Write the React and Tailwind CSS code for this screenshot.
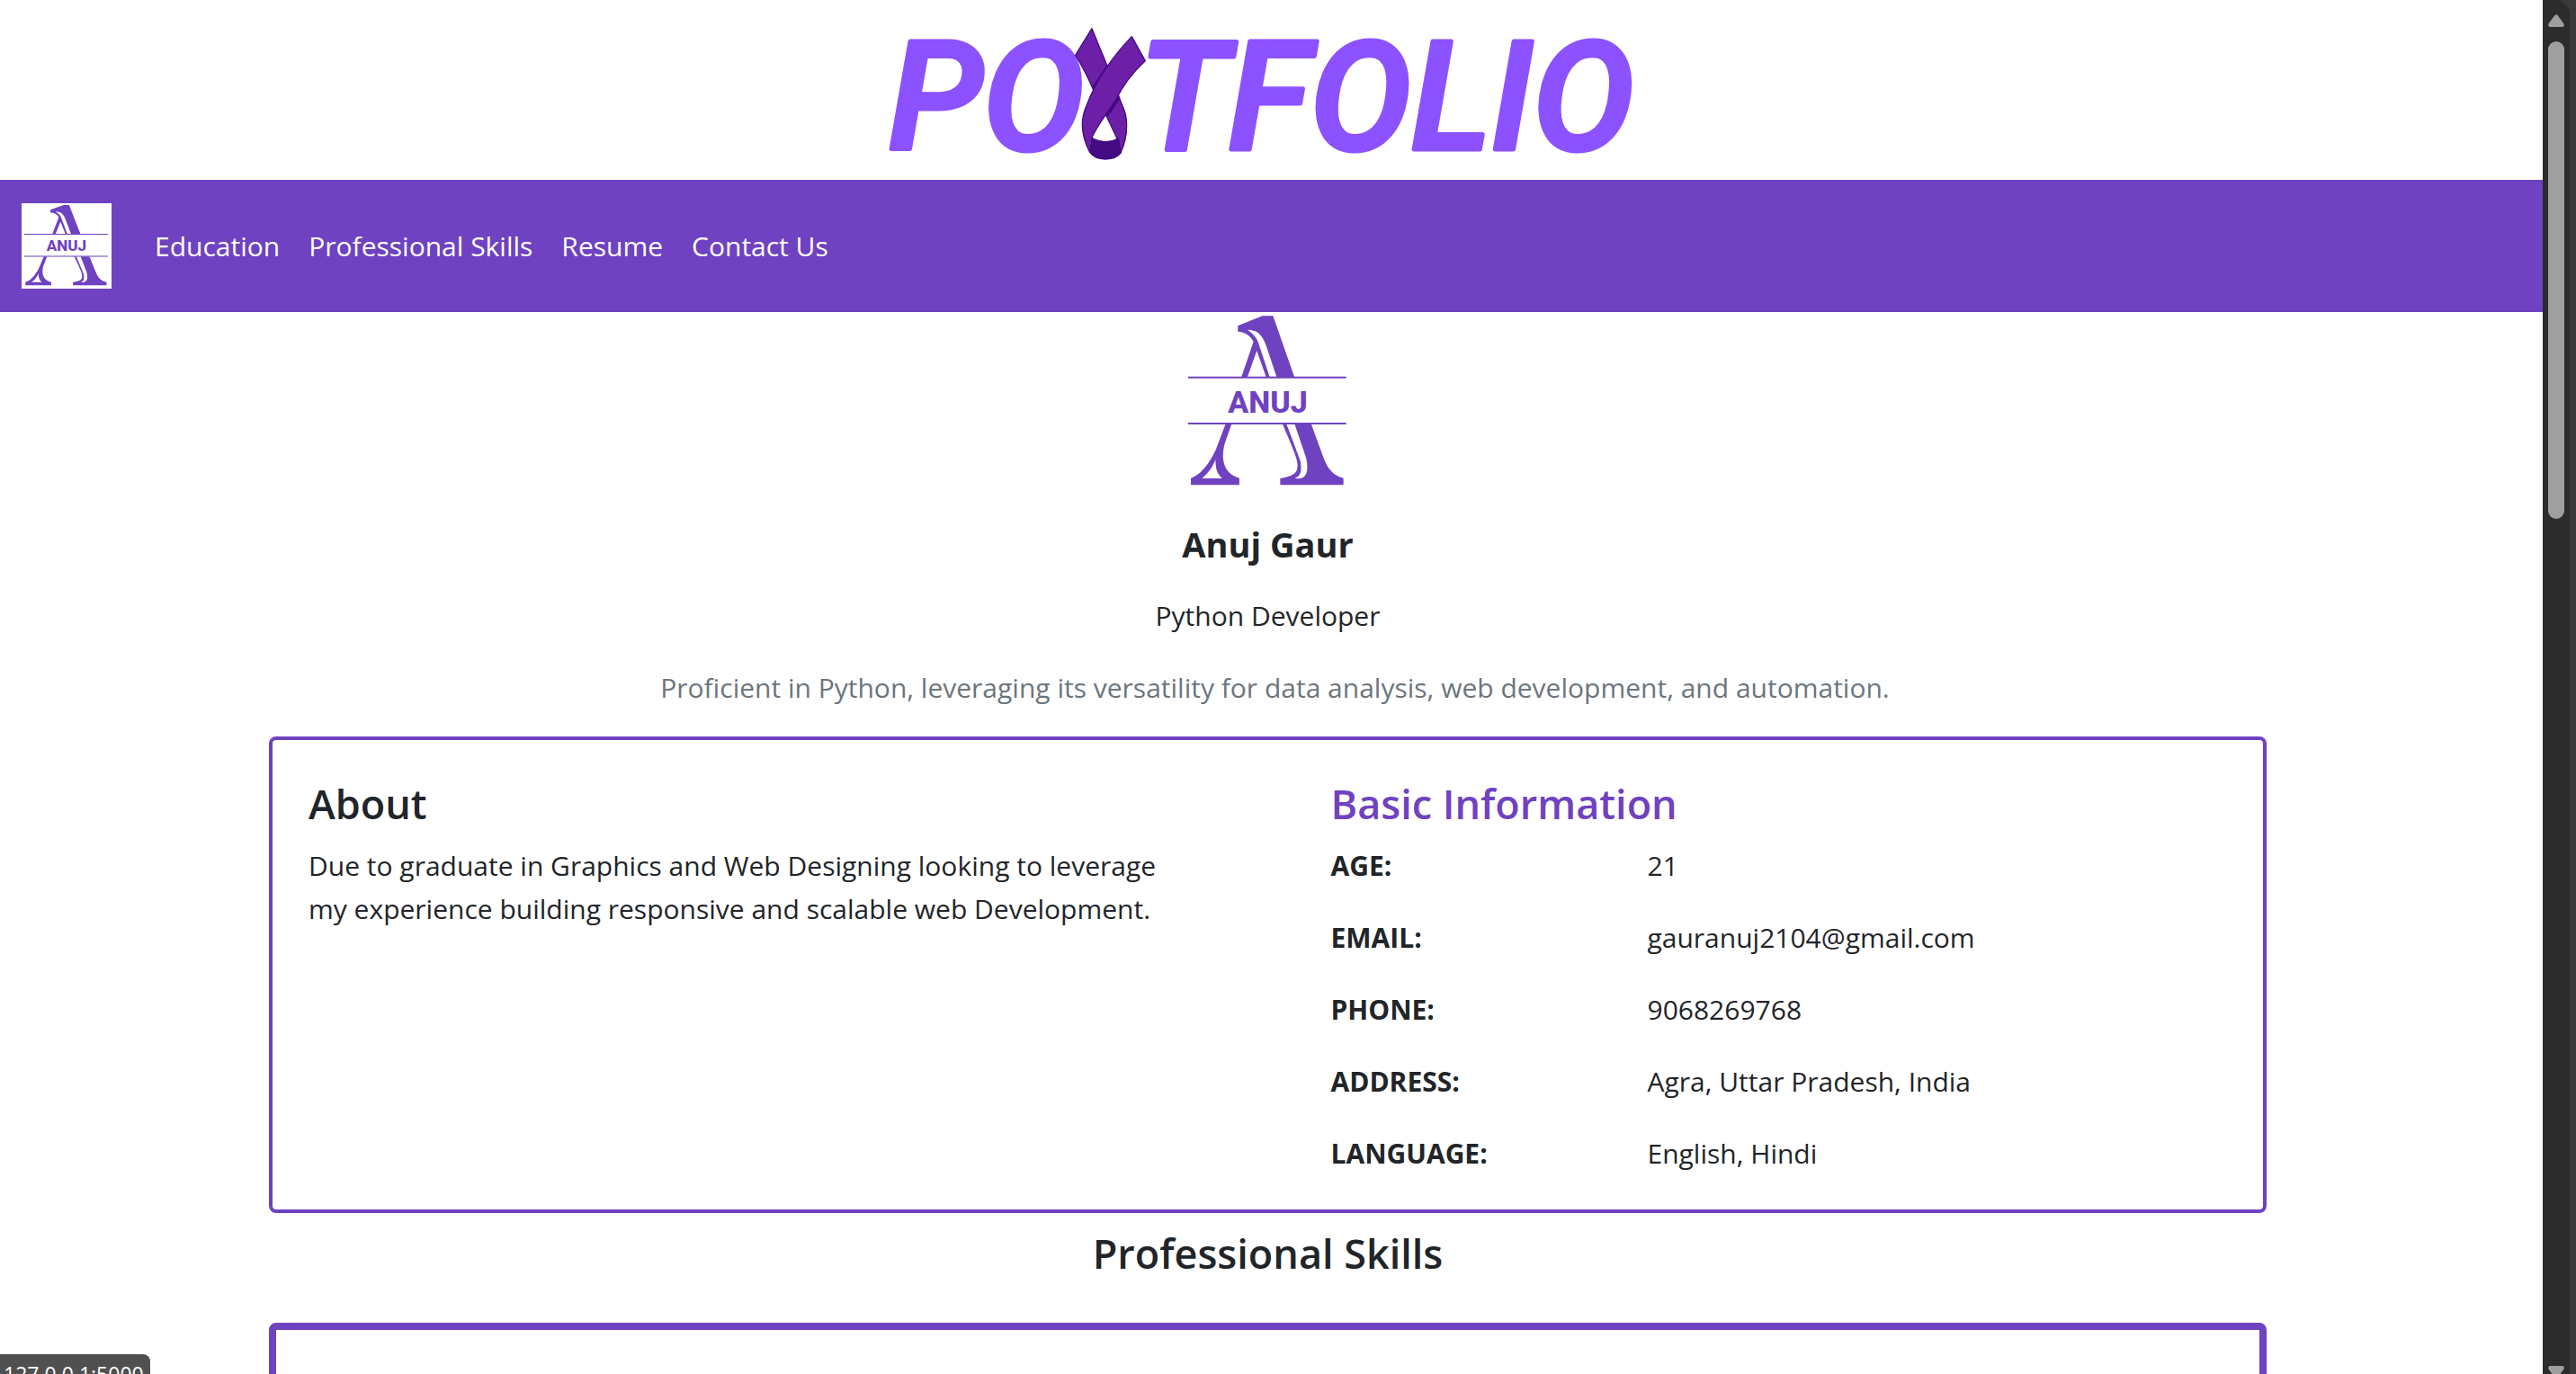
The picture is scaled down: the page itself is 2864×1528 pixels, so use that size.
const navLinks = ["Education", "Professional Skills", "Resume", "Contact Us"];

const basicInfo = [
  ["AGE:", "21"],
  ["EMAIL:", "gauranuj2104@gmail.com"],
  ["PHONE:", "9068269768"],
  ["ADDRESS:", "Agra, Uttar Pradesh, India"],
  ["LANGUAGE:", "English, Hindi"],
];

function Wordmark() {
  return (
    <svg
      className="h-[200px] w-[860px]"
      viewBox="0 0 860 200"
      role="img"
      aria-label="Portfolio"
    >
      <g
        fill="#8c52ff"
        stroke="#8c52ff"
        strokeWidth="5"
        strokeLinejoin="round"
        fontFamily="Roboto, sans-serif"
        fontStyle="italic"
        fontWeight="500"
        fontSize="169"
      >
        <text x="8" y="166">PO</text>
        <text x="286" y="166">TFOLIO</text>
      </g>
      <g
        transform="translate(-10 10) scale(0.3333)"
        strokeLinejoin="round"
        strokeWidth="4"
        stroke="#430a82"
        fill="#6d1fa8"
      >
        <path d="M732 65 L783 190 L738 272 C722 235 700 190 677 154Z" />
        <path d="M783 190 L800 178 L742 278 L735 260Z" fill="#430a82" />
        <path d="M820 288 C835 330 848 345 848 388 C848 425 840 455 827 482 L816 432 L776 348Z" />
        <path d="M820 288 L824 300 L784 358 L776 348Z" fill="#430a82" />
        <path
          d="M727 428 Q775 456 820 432 L828 480 C810 508 745 508 727 480Z"
          fill="#430a82"
        />
        <path d="M865 92 L910 173 C870 210 838 250 815 298 C785 345 745 395 732 430 L725 478 C697 425 692 370 715 320 C745 240 800 160 865 92Z" />
      </g>
    </svg>
  );
}

function Monogram({ boxClass, textClass }) {
  return (
    <span className={`grid place-items-center bg-white text-[#6f42c1] ${boxClass}`}>
      <svg
        className="col-start-1 row-start-1 h-full w-full"
        viewBox="48 23 562 600"
        preserveAspectRatio="none"
        fill="currentColor"
        fillRule="evenodd"
        aria-hidden="true"
      >
        <path d="M310 36 H345 L416 240 H357 L322 135 C308 95 290 82 260 82 C275 92 288 105 295 122 L334 240 H322 L291 152 L260 240 H240 L280 122 C268 98 250 90 228 88 V69Z" />
        <path d="M63 238 H588 V244 H63Z M63 392 H588 V398 H63Z" />
        <path d="M187 397 H207 L184 463 C172 510 178 562 233 577 V600 H72 V577 C110 565 140 515 155 482Z M109 578 H176 C158 562 154 545 154 515 C145 540 132 558 109 578Z" />
        <path d="M377 397 H472 L515 515 C530 550 545 568 579 577 V600 H369 V578 C405 572 430 565 426 530 C424 505 405 465 377 397Z M390 397 H417 L455 510 C466 560 452 579 430 579 L417 578 C440 570 440 550 436 520Z" />
      </svg>
      <span
        className={`col-start-1 row-start-1 font-[Roboto,sans-serif] font-extrabold leading-none ${textClass}`}
      >
        ANUJ
      </span>
    </span>
  );
}

function Scrollbar() {
  return (
    <div className="flex w-[37px] shrink-0 bg-[#3a3a3a]" aria-hidden="true">
      <div className="flex w-[30px] flex-col items-center rounded-tr-2xl bg-[#2c2c2c] pt-4">
        <svg className="h-[14px] w-[18px]" viewBox="0 0 18 14" fill="#9f9f9f">
          <path d="M7 1.5 Q9 -1 11 1.5 L17.5 10.5 Q18.500 13.500 16 14 H2 Q-.5 13.500 .5 10.500Z" />
        </svg>
        <div className="mt-4 h-[531px] w-[18px] rounded-full bg-[#9f9f9f]" />
        <svg className="mt-auto h-[9px] w-[18px] shrink-0" viewBox="0 0 18 9" fill="#9f9f9f">
          <path d="M2 0 H16 Q18.500 .5 17.500 3.500 L13.500 9 H4.500 L.5 3.500 Q-.5 .5 2 0Z" />
        </svg>
      </div>
    </div>
  );
}

export default function App() {
  return (
    <div className="flex h-screen overflow-hidden bg-white font-['Open_Sans','Noto_Sans',sans-serif] text-[30px] leading-[48px] text-[#212529]">
      <div className="min-w-0 flex-1 overflow-hidden">
        <header>
          <h1 className="flex justify-center pr-2">
            <Wordmark />
          </h1>
          <nav className="flex h-[147px] items-center bg-[#6f42c1] px-6 text-white">
            <a href="#home" aria-label="Home">
              <Monogram boxClass="h-[95px] w-[100px]" textClass="text-[17px]" />
            </a>
            <ul className="ml-12 flex gap-8">
              {navLinks.map((label) => (
                <li key={label}>
                  <a href="#section">{label}</a>
                </li>
              ))}
            </ul>
          </nav>
        </header>

        <main className="pr-2">
          <section className="flex flex-col items-center text-center">
            <Monogram boxClass="h-[200px] w-[188px]" textClass="text-[34px]" />
            <h2 className="mt-[34px] text-[38px] font-bold">Anuj Gaur</h2>
            <p className="mt-8">Python Developer</p>
            <p className="mt-8 pl-4 text-[#6c757d]">
              Proficient in Python, leveraging its versatility for data analysis, web
              development, and automation.
            </p>
          </section>

          <section className="mx-auto mt-[30px] grid max-w-[2221px] grid-cols-2 rounded-lg border-4 border-[#6f42c1] pt-[42px] pb-[38px]">
            <div className="pl-10">
              <h3 className="mb-4 text-[45px] leading-[58px] font-semibold">About</h3>
              <p className="max-w-[1000px]">
                Due to graduate in Graphics and Web Designing looking to leverage
                <br />
                my experience building responsive and scalable web Development.
              </p>
            </div>
            <div className="pl-[70px]">
              <h3 className="mb-4 text-[45px] leading-[58px] font-semibold text-[#6f42c1]">
                Basic Information
              </h3>
              <dl className="grid grid-cols-[352px_1fr] gap-y-8">
                {basicInfo.map(([label, value]) => (
                  <div key={label} className="contents">
                    <dt className="font-bold">{label}</dt>
                    <dd>{value}</dd>
                  </div>
                ))}
              </dl>
            </div>
          </section>

          <section>
            <h2 className="mt-4 mb-12 text-center text-[45px] leading-[58px] font-semibold">
              Professional Skills
            </h2>
            <div className="mx-auto h-[400px] max-w-[2221px] rounded-lg border-8 border-[#6f42c1]" />
          </section>
        </main>
      </div>

      <Scrollbar />

      <div className="fixed bottom-0 left-0 h-[22px] w-[167px] overflow-hidden rounded-tr-lg bg-[#505050] pt-2 pl-1 text-[23px] leading-7 text-white">
        127.0.0.1:5000
      </div>
    </div>
  );
}
